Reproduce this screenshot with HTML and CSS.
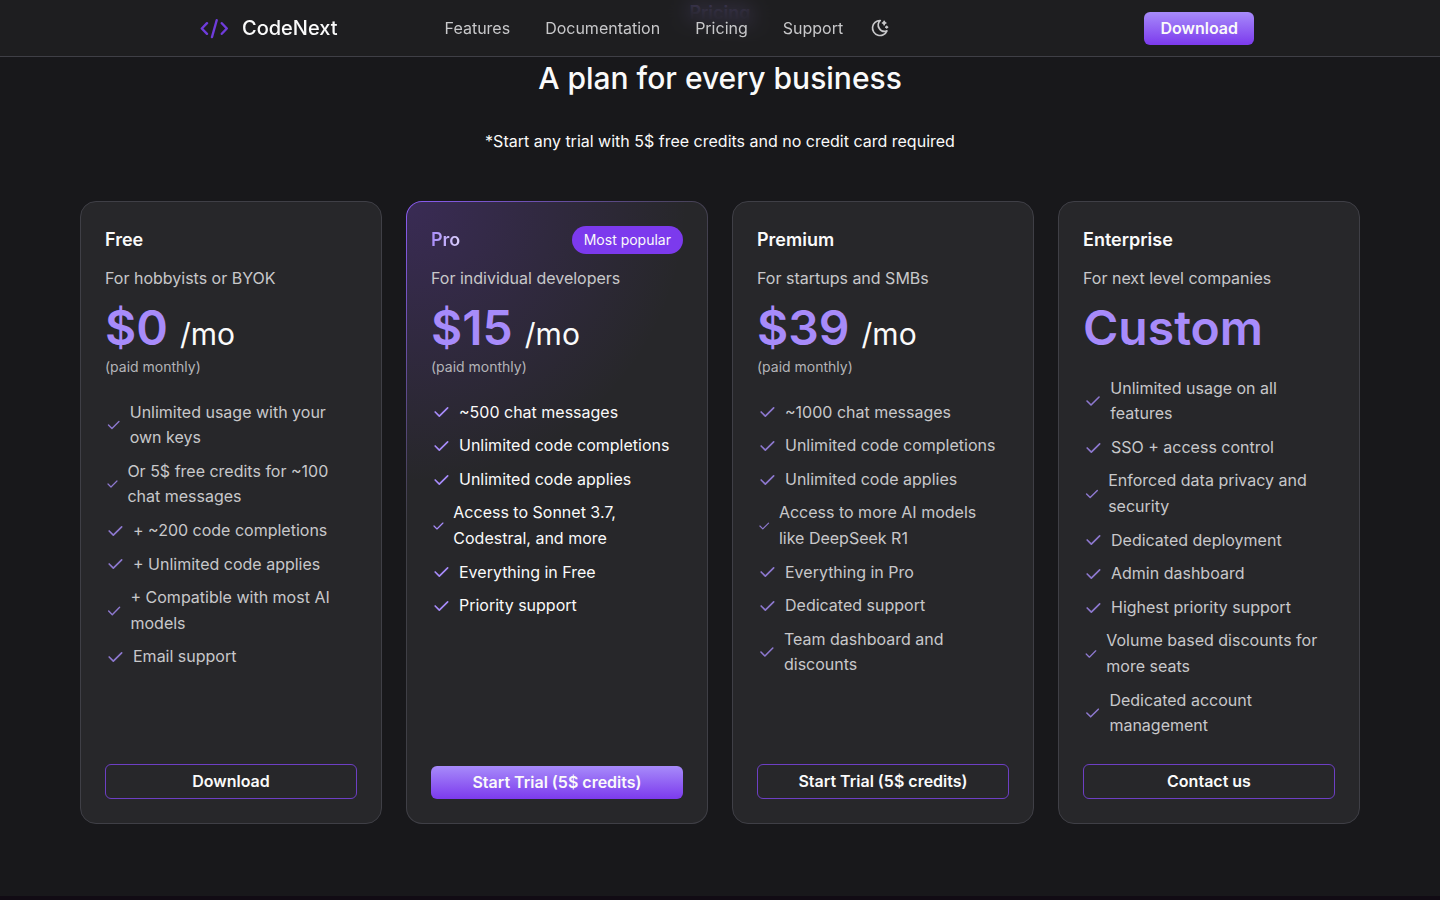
FILE: index.html
```
<!DOCTYPE html>
<html lang="en">
<head>
    <meta charset="UTF-8">
    <meta name="viewport" content="width=device-width, initial-scale=1.0">
    <title>CodeNext - Pricing</title>
    <link rel="stylesheet" href="styles.css">
</head>
<body>
    <svg class="sprite" aria-hidden="true">
        <symbol id="check" viewBox="0 0 24 24">
            <path d="M5 12l5 5L20 7" fill="none" stroke="currentColor" stroke-width="2" stroke-linecap="round" stroke-linejoin="round"/>
        </symbol>
    </svg>

    <header class="navbar">
        <div class="navbar-inner">
            <a class="logo" href="#">
                <svg class="logo-icon" viewBox="0 0 28 28" fill="none" stroke="currentColor" stroke-width="2.4" stroke-linecap="round" stroke-linejoin="round" aria-hidden="true">
                    <path d="M7 9.200l-5.200 5.300 5.200 5.300M21.800 9.200l5 5.300-5 5.300M16.700 6.200l-4.700 16.800"/>
                </svg>
                CodeNext
            </a>
            <nav class="nav-links">
                <a href="#">Features</a>
                <a href="#">Documentation</a>
                <a href="#pricing">Pricing</a>
                <a href="#">Support</a>
                <button type="button" class="theme-toggle" aria-label="Toggle theme">
                    <svg viewBox="0 0 24 24" fill="none" stroke="currentColor" stroke-width="2" stroke-linecap="round" stroke-linejoin="round" aria-hidden="true">
                        <path d="M12 3c.132 0 .263 0 .393 0a7.500 7.500 0 0 0 7.920 12.446a9 9 0 1 1-8.313-12.454z"/>
                        <path d="M17 4a2 2 0 0 0 2 2a2 2 0 0 0-2 2a2 2 0 0 0-2-2a2 2 0 0 0 2-2M19 11h2m-1-1v2"/>
                    </svg>
                </button>
            </nav>
            <button type="button" class="btn btn-primary">Download</button>
        </div>
    </header>

    <main class="pricing" id="pricing">
        <p class="eyebrow">Pricing</p>
        <h2>A plan for every business</h2>
        <p class="note">*Start any trial with 5$ free credits and no credit card required</p>

        <div class="plans">
            <section class="card">
                <div class="card-head"><h3>Free</h3></div>
                <p class="tagline">For hobbyists or BYOK</p>
                <p class="price">$0 <span>/mo</span></p>
                <p class="billing">(paid monthly)</p>
                <ul class="features">
                    <li><svg><use href="#check"/></svg><span>Unlimited usage with your own keys</span></li>
                    <li><svg><use href="#check"/></svg><span>Or 5$ free credits for ~100 chat messages</span></li>
                    <li><svg><use href="#check"/></svg><span>+ ~200 code completions</span></li>
                    <li><svg><use href="#check"/></svg><span>+ Unlimited code applies</span></li>
                    <li><svg><use href="#check"/></svg><span>+ Compatible with most AI models</span></li>
                    <li><svg><use href="#check"/></svg><span>Email support</span></li>
                </ul>
                <button type="button" class="btn btn-outline">Download</button>
            </section>

            <section class="card card-popular">
                <div class="card-head">
                    <h3>Pro</h3>
                    <span class="badge">Most popular</span>
                </div>
                <p class="tagline">For individual developers</p>
                <p class="price">$15 <span>/mo</span></p>
                <p class="billing">(paid monthly)</p>
                <ul class="features">
                    <li><svg><use href="#check"/></svg><span>~500 chat messages</span></li>
                    <li><svg><use href="#check"/></svg><span>Unlimited code completions</span></li>
                    <li><svg><use href="#check"/></svg><span>Unlimited code applies</span></li>
                    <li><svg><use href="#check"/></svg><span>Access to Sonnet 3.7, Codestral, and more</span></li>
                    <li><svg><use href="#check"/></svg><span>Everything in Free</span></li>
                    <li><svg><use href="#check"/></svg><span>Priority support</span></li>
                </ul>
                <button type="button" class="btn btn-primary">Start Trial (5$ credits)</button>
            </section>

            <section class="card">
                <div class="card-head"><h3>Premium</h3></div>
                <p class="tagline">For startups and SMBs</p>
                <p class="price">$39 <span>/mo</span></p>
                <p class="billing">(paid monthly)</p>
                <ul class="features">
                    <li><svg><use href="#check"/></svg><span>~1000 chat messages</span></li>
                    <li><svg><use href="#check"/></svg><span>Unlimited code completions</span></li>
                    <li><svg><use href="#check"/></svg><span>Unlimited code applies</span></li>
                    <li><svg><use href="#check"/></svg><span>Access to more AI models like&nbsp;DeepSeek R1</span></li>
                    <li><svg><use href="#check"/></svg><span>Everything in Pro</span></li>
                    <li><svg><use href="#check"/></svg><span>Dedicated support</span></li>
                    <li><svg><use href="#check"/></svg><span>Team dashboard and discounts</span></li>
                </ul>
                <button type="button" class="btn btn-outline">Start Trial (5$ credits)</button>
            </section>

            <section class="card">
                <div class="card-head"><h3>Enterprise</h3></div>
                <p class="tagline">For next level companies</p>
                <p class="price">Custom</p>
                <ul class="features">
                    <li><svg><use href="#check"/></svg><span>Unlimited usage on all features</span></li>
                    <li><svg><use href="#check"/></svg><span>SSO + access control</span></li>
                    <li><svg><use href="#check"/></svg><span>Enforced data privacy and security</span></li>
                    <li><svg><use href="#check"/></svg><span>Dedicated deployment</span></li>
                    <li><svg><use href="#check"/></svg><span>Admin dashboard</span></li>
                    <li><svg><use href="#check"/></svg><span>Highest priority support</span></li>
                    <li><svg><use href="#check"/></svg><span>Volume based discounts for more seats</span></li>
                    <li><svg><use href="#check"/></svg><span>Dedicated account management</span></li>
                </ul>
                <button type="button" class="btn btn-outline">Contact us</button>
            </section>
        </div>
    </main>
</body>
</html>
```
FILE: styles.css
```
:root {
    --bg: #18181b;
    --card: #27272a;
    --border: #3f3f46;
    --purple: #7c3aed;
    --purple-light: #a78bfa;
    --text: #fafafa;
    --muted: #c8c8ca;
}

* {
    box-sizing: border-box;
    margin: 0;
    padding: 0;
}

body {
    font-family: Inter, sans-serif;
    font-size: 16px;
    line-height: 1.6;
    background-color: #110b14;
    color: var(--text);
}

a {
    color: inherit;
    text-decoration: none;
}

.sprite {
    display: none;
}

/* Navbar */
.navbar {
    position: fixed;
    top: 0;
    left: 0;
    right: 0;
    z-index: 10;
    background-color: rgba(35, 35, 37, 0.6);
    backdrop-filter: blur(10px);
    border-bottom: 1px solid var(--border);
}

.navbar-inner {
    display: flex;
    align-items: center;
    max-width: 1068px;
    height: 56px;
    margin: 0 auto;
    padding-left: 14px;
}

.logo {
    display: flex;
    align-items: center;
    gap: 14px;
    margin-right: 107px;
    font-size: 20px;
    font-weight: 500;
}

.logo-icon {
    width: 28px;
    height: 28px;
    color: #6f3cdb;
}

.nav-links {
    display: flex;
    align-items: center;
    gap: 35px;
    line-height: 26px;
    color: var(--muted);
}

.theme-toggle {
    display: flex;
    margin-left: -8px;
    border: none;
    background: none;
    color: inherit;
    cursor: pointer;
}

.theme-toggle svg {
    width: 20px;
    height: 20px;
}

.navbar .btn {
    margin-left: auto;
}

/* Buttons */
.btn {
    padding: 4px 16px;
    border: none;
    border-radius: 6px;
    font-family: inherit;
    font-size: 16px;
    font-weight: 600;
    line-height: 25px;
    color: var(--text);
    cursor: pointer;
}

.btn-primary {
    background: linear-gradient(to bottom, var(--purple-light), var(--purple));
}

.btn-outline {
    border: 1px solid #6d3fc4;
    background: none;
}

/* Pricing */
.pricing {
    min-height: 896px;
    padding: 0 80px 72px;
    background-color: var(--bg);
    text-align: center;
}

.eyebrow {
    font-size: 18px;
    font-weight: 600;
    line-height: 26px;
    color: var(--purple-light);
}

.pricing h2 {
    margin-top: 28px;
    font-size: 30px;
    font-weight: 500;
    line-height: 48px;
}

.note {
    margin-top: 26px;
    line-height: 26px;
}

.plans {
    display: grid;
    grid-template-columns: repeat(4, 1fr);
    gap: 24px;
    max-width: 1280px;
    margin: 47px auto 0;
    text-align: left;
}

.card {
    display: flex;
    flex-direction: column;
    padding: 24px;
    border: 1px solid var(--border);
    border-radius: 16px;
    background-color: var(--card);
}

.card-popular {
    border-color: transparent;
    background:
        radial-gradient(circle at top left, rgba(124, 58, 237, 0.22), transparent 280px) padding-box,
        linear-gradient(var(--card), var(--card)) padding-box,
        radial-gradient(circle at top left, #8b5cf6, var(--border) 320px) border-box;
}

.card-head {
    display: flex;
    align-items: center;
    justify-content: space-between;
    height: 28px;
}

.card h3 {
    font-size: 18px;
    font-weight: 600;
    line-height: 28px;
}

.card-popular h3 {
    background: linear-gradient(to right, var(--purple-light), #ffffff 48px);
    background-clip: text;
    color: transparent;
}

.badge {
    padding: 0 12px;
    border-radius: 14px;
    background-color: var(--purple);
    font-size: 14px;
    line-height: 28px;
}

.tagline {
    margin-top: 12px;
    color: var(--muted);
}

.price {
    margin-top: 8px;
    font-size: 48px;
    font-weight: 600;
    line-height: 56px;
    color: var(--purple-light);
}

.price span {
    font-size: 30px;
    font-weight: 400;
    line-height: 30px;
    color: var(--text);
}

.billing {
    margin-bottom: 2px;
    font-size: 14px;
    line-height: 22px;
    color: #b4b4b8;
}

.features {
    display: flex;
    flex-direction: column;
    gap: 8px;
    margin: 20px 0 25px;
    list-style: none;
    color: var(--muted);
}

.card-popular .features {
    color: var(--text);
}

.features li {
    display: flex;
    align-items: center;
    gap: 8px;
}

.features svg {
    width: 20px;
    height: 20px;
    color: #8d78cf;
}

.card-popular .features svg {
    color: var(--purple-light);
}

.card .btn {
    margin-top: auto;
}

@media (max-width: 1100px) {
    .plans {
        grid-template-columns: 1fr 1fr;
    }
}
```
